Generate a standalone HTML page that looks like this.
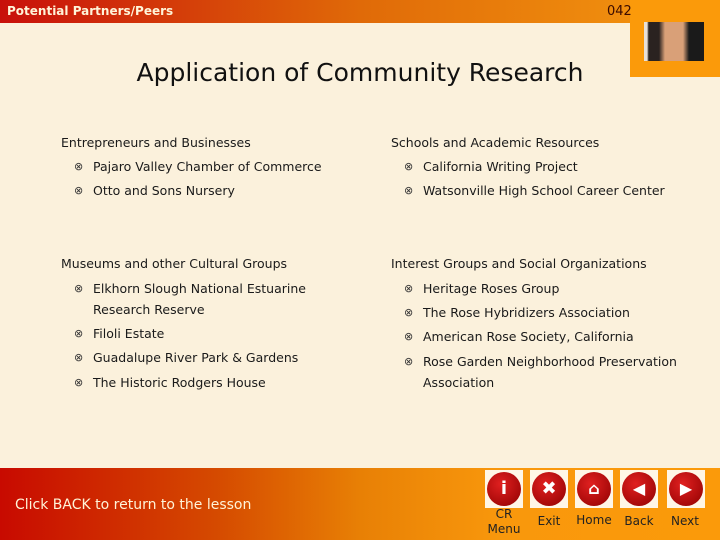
<!DOCTYPE html><html><head><style>
body{margin:0;width:720px;height:540px;overflow:hidden;background:#fbf1dc;font-family:"DejaVu Sans","Liberation Sans",sans-serif;position:relative}
.top{position:absolute;left:0;top:0;width:720px;height:23px;background:linear-gradient(90deg,#c8100a,#e06a08 50%,#f59a10)}
.box{position:absolute;left:630px;top:0;width:90px;height:77px;background:#fb9a0a}
.photo{position:absolute;left:644px;top:22px;width:60px;height:39px;background:linear-gradient(90deg,#e8e0d8 0 5%,#2a2220 8% 25%,#d9a078 35% 65%,#1a1a1a 75%);}
.t{position:absolute;color:#1a1a1a;font-size:12.5px;white-space:nowrap}
.b{position:absolute;font-size:11px;color:#333}
h1{position:absolute;left:0;width:720px;top:58px;margin:0;text-align:center;font-weight:normal;font-size:25px;color:#111}
.bot{position:absolute;left:0;top:468px;width:720px;height:72px;background:linear-gradient(90deg,#c80a00,#d54a00 30%,#e88005 50%,#f9980c 70%,#fb9a0a)}
.sq{position:absolute;top:470px;width:38px;height:38px;background:#fff6e6}
.btn{position:absolute;top:472px;width:34px;height:34px;border-radius:50%;background:radial-gradient(circle at 40% 35%,#e02020,#900000);color:#fff;font-weight:bold;text-align:center;line-height:34px;font-size:18px}
.lbl{position:absolute;font-size:12px;color:#222;text-align:center;width:50px}
</style></head><body>
<div class="top"></div>
<div class="box"></div><div class="photo"></div>
<div class="t" style="left:7px;top:4px;color:#fff4d8;font-weight:bold;font-size:12px">Potential Partners/Peers</div>
<div class="t" style="left:607px;top:4px;color:#3a0a00;font-size:13px">042</div>
<h1>Application of Community Research</h1>

<div class="t" style="left:61px;top:135px">Entrepreneurs and Businesses</div>
<div class="b" style="left:74px;top:160px">⊗</div><div class="t" style="left:93px;top:159px">Pajaro Valley Chamber of Commerce</div>
<div class="b" style="left:74px;top:184px">⊗</div><div class="t" style="left:93px;top:183px">Otto and Sons Nursery</div>

<div class="t" style="left:391px;top:135px">Schools and Academic Resources</div>
<div class="b" style="left:404px;top:160px">⊗</div><div class="t" style="left:423px;top:159px">California Writing Project</div>
<div class="b" style="left:404px;top:184px">⊗</div><div class="t" style="left:423px;top:183px">Watsonville High School Career Center</div>

<div class="t" style="left:61px;top:256px">Museums and other Cultural Groups</div>
<div class="b" style="left:74px;top:282px">⊗</div><div class="t" style="left:93px;top:281px">Elkhorn Slough National Estuarine</div>
<div class="t" style="left:93px;top:302px">Research Reserve</div>
<div class="b" style="left:74px;top:327px">⊗</div><div class="t" style="left:93px;top:326px">Filoli Estate</div>
<div class="b" style="left:74px;top:351px">⊗</div><div class="t" style="left:93px;top:350px">Guadalupe River Park &amp; Gardens</div>
<div class="b" style="left:74px;top:376px">⊗</div><div class="t" style="left:93px;top:375px">The Historic Rodgers House</div>

<div class="t" style="left:391px;top:256px">Interest Groups and Social Organizations</div>
<div class="b" style="left:404px;top:282px">⊗</div><div class="t" style="left:423px;top:281px">Heritage Roses Group</div>
<div class="b" style="left:404px;top:306px">⊗</div><div class="t" style="left:423px;top:305px">The Rose Hybridizers Association</div>
<div class="b" style="left:404px;top:330px">⊗</div><div class="t" style="left:423px;top:329px">American Rose Society, California</div>
<div class="b" style="left:404px;top:355px">⊗</div><div class="t" style="left:423px;top:354px">Rose Garden Neighborhood Preservation</div>
<div class="t" style="left:423px;top:375px">Association</div>

<div class="bot"></div>
<div class="t" style="left:15px;top:497px;color:#fff4d8;font-size:14px">Click BACK to return to the lesson</div>
<div class="sq" style="left:485px"></div><div class="sq" style="left:530px"></div><div class="sq" style="left:575px"></div><div class="sq" style="left:620px"></div><div class="sq" style="left:667px"></div>
<div class="btn" style="left:487px">i</div>
<div class="btn" style="left:532px">✖</div>
<div class="btn" style="left:577px;font-size:16px">⌂</div>
<div class="btn" style="left:622px;font-size:16px">◀</div>
<div class="btn" style="left:669px;font-size:16px">▶</div>
<div class="lbl" style="left:479px;top:507px;line-height:15px">CR<br>Menu</div>
<div class="lbl" style="left:524px;top:514px">Exit</div>
<div class="lbl" style="left:569px;top:513px">Home</div>
<div class="lbl" style="left:614px;top:514px">Back</div>
<div class="lbl" style="left:660px;top:514px">Next</div>
</body></html>
